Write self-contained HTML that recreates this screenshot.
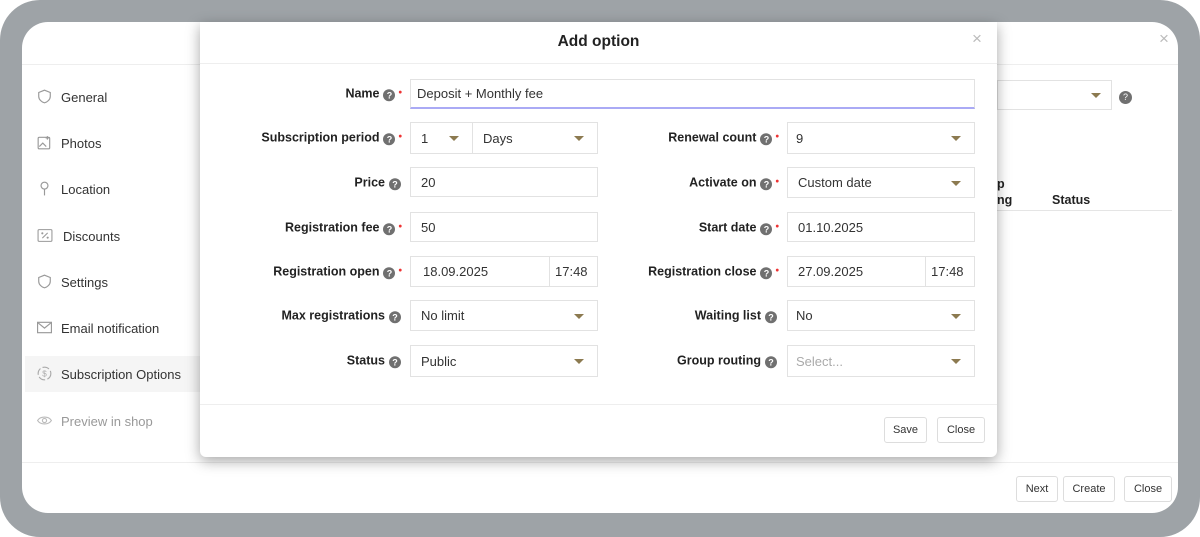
<!DOCTYPE html>
<html><head><meta charset="utf-8"><style>
*{box-sizing:border-box;margin:0;padding:0}
body{width:1200px;height:537px;background:#fff;font-family:"Liberation Sans",sans-serif;position:relative;overflow:hidden;color:#222}
.frame{position:absolute;left:0;top:0;width:1200px;height:537px;background:#9ea3a7;border-radius:40px}
.panel{position:absolute;left:22px;top:22px;width:1156px;height:491px;background:#fff;border-radius:26px;overflow:hidden}
.abs{position:absolute}
.nav{position:absolute;left:61px;font-size:13px;color:#333}
.ico{position:absolute;left:37px;width:15px;height:15px}
.modal{position:absolute;left:200px;top:22px;width:797px;height:435px;background:#fff;border-radius:0 0 6px 6px;box-shadow:0 4px 14px rgba(0,0,0,.35)}
.lbl{position:absolute;font-size:12.5px;font-weight:bold;color:#222;text-align:right;white-space:nowrap;transform:translateY(-45%)}
.q{display:inline-block;width:12px;height:12px;border-radius:50%;background:#707070;color:#fff;font-size:9px;line-height:12px;text-align:center;vertical-align:-1px;margin-left:4px}
.d{color:#e33;font-size:10px;margin-left:3px;vertical-align:2px}
.inp{position:absolute;border:1px solid #e2e2e2;background:#fff;font-size:13px;color:#333;padding-left:10px;display:flex;align-items:center}
.car{position:absolute;right:13px;top:50%;margin-top:-2px;width:0;height:0;border-left:5px solid transparent;border-right:5px solid transparent;border-top:5px solid #8c7a50}
.btn{position:absolute;border:1px solid #ddd;border-radius:3px;font-size:11px;color:#333;display:flex;align-items:center;justify-content:center;background:#fff}
</style></head><body>
<div class="frame"></div>
<div class="panel">
 <div class="abs" style="left:0;top:42px;width:1156px;height:1px;background:#eee"></div>
 <div class="abs" style="left:0;top:440px;width:1156px;height:1px;background:#eee"></div>
 <div class="abs" style="left:1137px;top:7px;font-size:17px;color:#bbb">×</div>
 <div class="abs" style="left:3px;top:334px;width:175px;height:36px;background:#f5f5f5"></div>
 <div class="abs" style="left:975px;top:58px;width:115px;height:30px;border:1px solid #e2e2e2"><div class="car" style="right:10px"></div></div>
 <div class="abs" style="left:1093px;top:64px"><span class="q" style="width:13px;height:13px;line-height:13px">?</span></div>
 <div class="abs" style="left:975px;top:155px;font-size:12.5px;font-weight:bold">p</div>
 <div class="abs" style="left:975px;top:171px;font-size:12.5px;font-weight:bold">ng</div>
 <div class="abs" style="left:1030px;top:171px;font-size:12.5px;font-weight:bold">Status</div>
 <div class="abs" style="left:975px;top:188px;width:175px;height:1px;background:#e5e5e5"></div>
 <div class="btn" style="left:994px;top:454px;width:42px;height:26px">Next</div>
 <div class="btn" style="left:1041px;top:454px;width:52px;height:26px">Create</div>
 <div class="btn" style="left:1102px;top:454px;width:48px;height:26px">Close</div>
</div>
<svg class="ico" style="top:89px" viewBox="0 0 13 13"><path d="M6.5 1L11.5 3V6.5C11.5 9 9 11.5 6.5 12C4 11.5 1.5 9 1.5 6.5V3Z" fill="none" stroke="#999" stroke-width="1"/></svg>
<div class="nav" style="top:90px">General</div>
<svg class="ico" style="top:135px" viewBox="0 0 13 13"><rect x="1" y="2" width="10" height="10" rx="1" fill="none" stroke="#999"/><path d="M2 10L5 7L8 10M9 1V4M7.5 2.5H10.5" fill="none" stroke="#999"/></svg>
<div class="nav" style="top:136px">Photos</div>
<svg class="ico" style="top:181px" viewBox="0 0 13 13"><circle cx="6.5" cy="4" r="3" fill="none" stroke="#999"/><path d="M6.5 7V12.5" stroke="#999"/></svg>
<div class="nav" style="top:182px">Location</div>
<svg class="ico" style="top:228px;width:16px" viewBox="0 0 15 13"><rect x="1" y="1" width="13" height="11" rx="1" fill="none" stroke="#999"/><path d="M5 9L10 4" stroke="#999"/><circle cx="5" cy="4.5" r="1" fill="#999"/><circle cx="10" cy="8.5" r="1" fill="#999"/></svg>
<div class="nav" style="top:229px;left:63px">Discounts</div>
<svg class="ico" style="top:274px" viewBox="0 0 13 13"><path d="M6.5 1L11.5 3V6.5C11.5 9 9 11.5 6.5 12C4 11.5 1.5 9 1.5 6.5V3Z" fill="none" stroke="#999"/></svg>
<div class="nav" style="top:275px">Settings</div>
<svg class="ico" style="top:320px" viewBox="0 0 13 13"><rect x="0.5" y="2" width="12" height="9" fill="none" stroke="#999"/><path d="M1 2.5L6.5 7L12 2.5" fill="none" stroke="#999"/></svg>
<div class="nav" style="top:321px">Email notification</div>
<svg class="ico" style="top:366px" viewBox="0 0 13 13"><circle cx="6.5" cy="6.5" r="5.5" fill="none" stroke="#aaa" stroke-dasharray="6 2"/><text x="6.5" y="9" font-size="7" text-anchor="middle" fill="#aaa" font-family="Liberation Sans">$</text></svg>
<div class="nav" style="top:367px">Subscription Options</div>
<svg class="ico" style="top:413px" viewBox="0 0 13 13"><path d="M0.5 6.5C3 2.5 10 2.5 12.5 6.5C10 10.5 3 10.5 0.5 6.5Z" fill="none" stroke="#bbb"/><circle cx="6.5" cy="6.5" r="1.8" fill="none" stroke="#bbb"/></svg>
<div class="nav" style="top:414px;color:#999">Preview in shop</div>

<div class="modal">
 <div class="abs" style="left:0;top:0;width:797px;height:42px;text-align:center;line-height:40px;font-size:15.5px;font-weight:bold;color:#222">Add option</div>
 <div class="abs" style="left:772px;top:7px;font-size:17px;color:#bbb">×</div>
 <div class="abs" style="left:0;top:41px;width:797px;height:1px;background:#eee"></div>
 <div class="abs" style="left:0;top:382px;width:797px;height:1px;background:#eee"></div>
 <div class="btn" style="left:684px;top:395px;width:43px;height:26px">Save</div>
 <div class="btn" style="left:737px;top:395px;width:48px;height:26px">Close</div>
</div>

<div class="lbl" style="right:798px;top:93px">Name<span class="q">?</span><span class="d">•</span></div>
<div class="lbl" style="right:798px;top:137px">Subscription period<span class="q">?</span><span class="d">•</span></div>
<div class="lbl" style="right:799px;top:182px">Price<span class="q">?</span></div>
<div class="lbl" style="right:798px;top:227px">Registration fee<span class="q">?</span><span class="d">•</span></div>
<div class="lbl" style="right:798px;top:271px">Registration open<span class="q">?</span><span class="d">•</span></div>
<div class="lbl" style="right:799px;top:315px">Max registrations<span class="q">?</span></div>
<div class="lbl" style="right:799px;top:360px">Status<span class="q">?</span></div>
<div class="lbl" style="right:421px;top:137px">Renewal count<span class="q">?</span><span class="d">•</span></div>
<div class="lbl" style="right:421px;top:182px">Activate on<span class="q">?</span><span class="d">•</span></div>
<div class="lbl" style="right:421px;top:227px">Start date<span class="q">?</span><span class="d">•</span></div>
<div class="lbl" style="right:421px;top:271px">Registration close<span class="q">?</span><span class="d">•</span></div>
<div class="lbl" style="right:423px;top:315px">Waiting list<span class="q">?</span></div>
<div class="lbl" style="right:423px;top:360px">Group routing<span class="q">?</span></div>

<div class="inp" style="left:410px;top:79px;width:565px;height:30px;border-bottom:2px solid #aaaaf5;padding-left:6px">Deposit + Monthly fee</div>
<div class="inp" style="left:410px;top:122px;width:63px;height:32px">1<div class="car"></div></div>
<div class="inp" style="left:472px;top:122px;width:126px;height:32px">Days<div class="car"></div></div>
<div class="inp" style="left:410px;top:167px;width:188px;height:30px">20</div>
<div class="inp" style="left:410px;top:212px;width:188px;height:30px">50</div>
<div class="inp" style="left:410px;top:256px;width:140px;height:31px;padding-left:12px">18.09.2025</div>
<div class="inp" style="left:549px;top:256px;width:49px;height:31px;padding-left:5px">17:48</div>
<div class="inp" style="left:410px;top:300px;width:188px;height:31px">No limit<div class="car"></div></div>
<div class="inp" style="left:410px;top:345px;width:188px;height:32px">Public<div class="car"></div></div>

<div class="inp" style="left:787px;top:122px;width:188px;height:32px;padding-left:8px">9<div class="car"></div></div>
<div class="inp" style="left:787px;top:167px;width:188px;height:31px">Custom date<div class="car"></div></div>
<div class="inp" style="left:787px;top:212px;width:188px;height:30px">01.10.2025</div>
<div class="inp" style="left:787px;top:256px;width:139px;height:31px">27.09.2025</div>
<div class="inp" style="left:925px;top:256px;width:50px;height:31px;padding-left:5px">17:48</div>
<div class="inp" style="left:787px;top:300px;width:188px;height:31px;padding-left:8px">No<div class="car"></div></div>
<div class="inp" style="left:787px;top:345px;width:188px;height:32px;padding-left:8px;color:#aaa">Select...<div class="car"></div></div>
</body></html>
